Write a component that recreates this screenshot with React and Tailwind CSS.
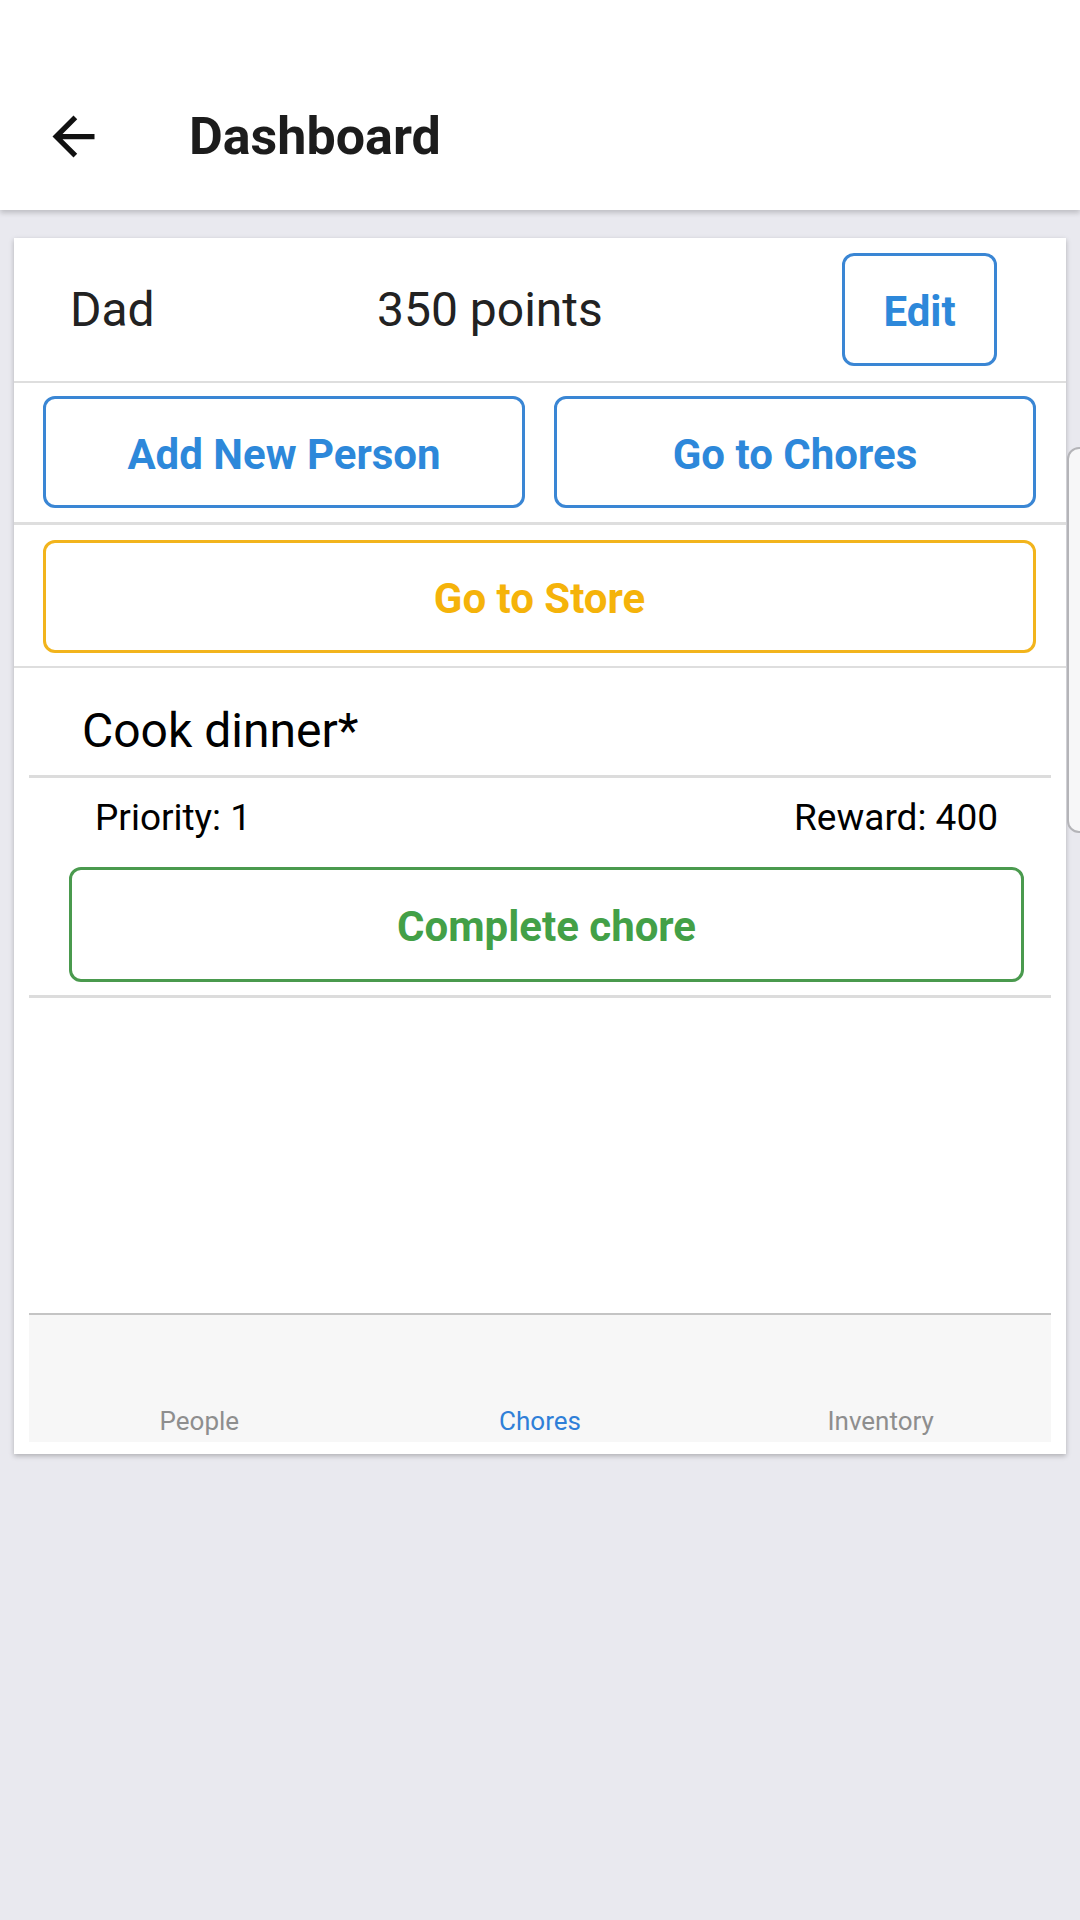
import React from 'react';

const BackArrow = () => (
  <svg width="63" height="63" viewBox="0 0 24 24" fill="#111">
    <path d="M20 11H7.83l5.59-5.59L12 4l-8 8 8 8 1.41-1.41L7.83 13H20v-2z" />
  </svg>
);

const tabs = [
  { label: 'People', active: false },
  { label: 'Chores', active: true },
  { label: 'Inventory', active: false },
];

export default function App() {
  return (
    <div
      className="relative w-[1080px] h-[1920px] bg-[#e9e9ef] overflow-hidden"
      style={{ fontFamily: 'Roboto, "Noto Sans", sans-serif' }}
    >
      {/* Header */}
      <div className="h-[210px] pt-[63px] bg-white shadow-[0_3px_5px_rgba(0,0,0,0.18)] relative z-10">
        <div className="h-[147px] flex items-center">
          <div className="ml-[42px]">
            <BackArrow />
          </div>
          <h1 className="ml-[84px] text-[52px] leading-[60px] font-bold text-[#1c1c1c]">
            Dashboard
          </h1>
        </div>
      </div>

      {/* Card */}
      <div className="mt-[28px] ml-[14px] w-[1052px] h-[1216px] bg-white flex flex-col shadow-[0_2px_5px_rgba(0,0,0,0.25)]">
        {/* Person row */}
        <div className="h-[145px] flex items-center border-b-2 border-[#dedede]">
          <span className="ml-[56px] w-[307px] text-[48px] leading-[56px] text-[#222]">Dad</span>
          <span className="w-[465px] text-[48px] leading-[56px] text-[#222]">350 points</span>
          <button className="w-[155px] h-[113px] pt-[4px] border-[3px] border-[#3a86d4] rounded-[12px] text-[42px] font-bold text-[#2d88da]">
            Edit
          </button>
        </div>

        {/* Nav buttons */}
        <div className="px-[29px] pt-[13px] pb-[14px] flex gap-[29px] border-b-[3px] border-[#dedede]">
          <button className="w-[482px] h-[112px] pt-[4px] border-[3px] border-[#3a86d4] rounded-[12px] text-[42px] font-bold text-[#2d88da]">
            Add New Person
          </button>
          <button className="w-[482px] h-[112px] pt-[4px] border-[3px] border-[#3a86d4] rounded-[12px] text-[42px] font-bold text-[#2d88da]">
            Go to Chores
          </button>
        </div>

        <div className="px-[29px] pt-[15px] pb-[13px] border-b-2 border-[#dedede]">
          <button className="w-[993px] h-[113px] pt-[4px] border-[3px] border-[#f2b41c] rounded-[12px] text-[42px] font-bold text-[#f5b30a]">
            Go to Store
          </button>
        </div>

        {/* Chore list */}
        <div className="flex-1 px-[15px]">
          <div className="h-[110px] pt-[35px] pl-[53px] border-b-[3px] border-[#dcdcdc]">
            <div className="text-[48px] leading-[56px] text-black">Cook dinner*</div>
          </div>
          <div className="pt-[18px] pb-[13px] border-b-[3px] border-[#dcdcdc]">
            <div className="flex justify-between pl-[66px] pr-[53px] text-[37px] leading-[43px] text-black">
              <span>Priority: 1</span>
              <span>Reward: 400</span>
            </div>
            <button className="mt-[28px] ml-[40px] w-[955px] h-[115px] pt-[4px] border-[3px] border-[#4a9a4e] rounded-[12px] text-[42px] font-bold text-[#43a047]">
              Complete chore
            </button>
          </div>
        </div>

        {/* Tab bar */}
        <div className="mx-[15px] mb-[12px] h-[129px] bg-[#f7f7f7] border-t-2 border-[#c4c4c4] flex items-end pb-[6px]">
          {tabs.map((t) => (
            <div
              key={t.label}
              className={`flex-1 text-center text-[26px] leading-[30px] ${t.active ? 'text-[#2f7fd8]' : 'text-[#8e8e8e]'}`}
            >
              {t.label}
            </div>
          ))}
        </div>
      </div>

      {/* Edge handle peeking from the right */}
      <div className="absolute left-[1067px] top-[447px] w-[40px] h-[386px] rounded-[12px] border-2 border-[#b4b4b8] bg-[#f7f7f8]" />
    </div>
  );
}
